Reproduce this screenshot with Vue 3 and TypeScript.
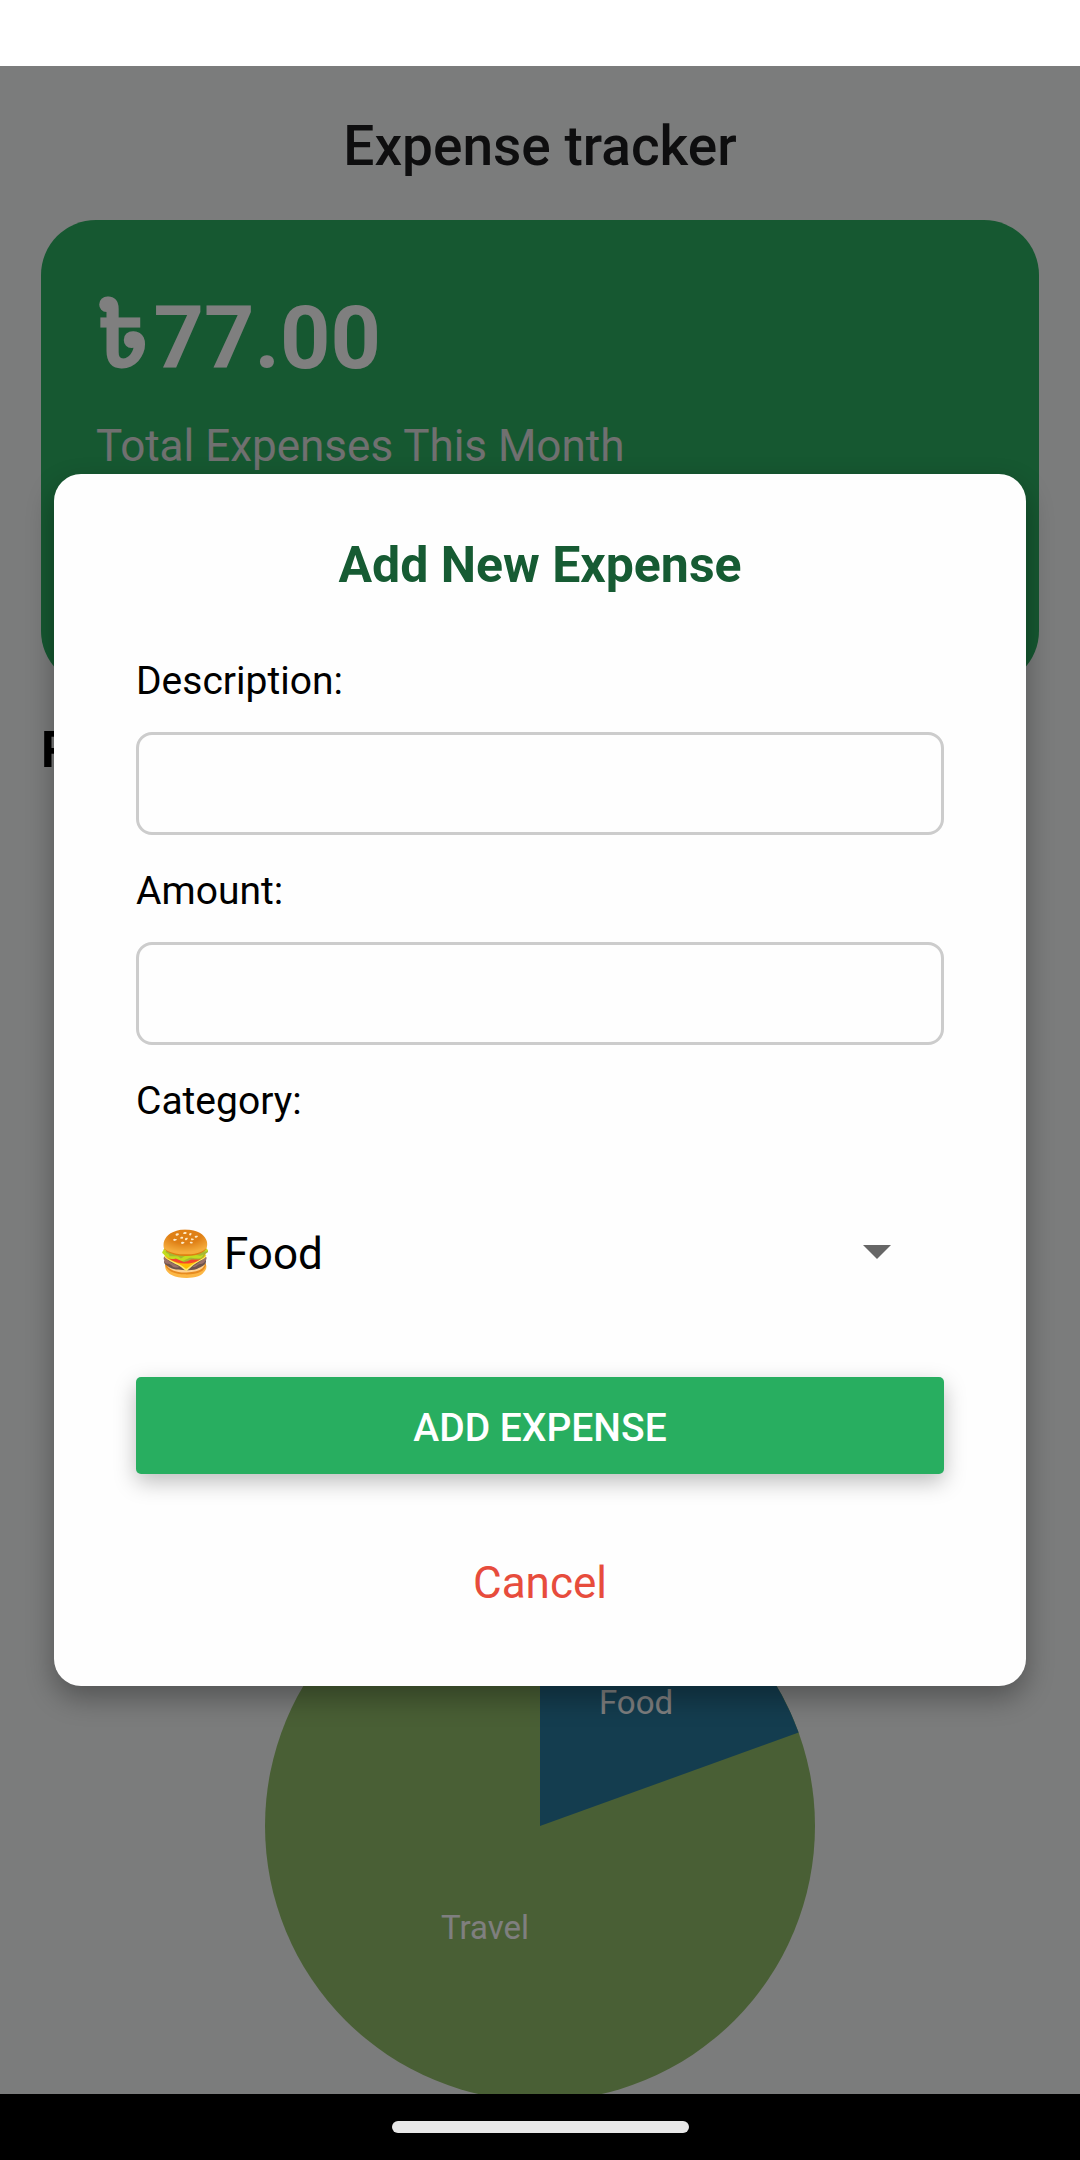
<script setup lang="ts">
import { ref } from 'vue'

const description = ref('')
const amount = ref('')
const category = ref('food')

// Share of each category: food 15 of 77, travel the rest
const radius = 275
const angle = (15 / 77) * 2 * Math.PI
const edgeX = radius + radius * Math.sin(angle)
const edgeY = radius - radius * Math.cos(angle)
const foodSlice = `M${radius} ${radius}V0A${radius} ${radius} 0 0 1 ${edgeX} ${edgeY}Z`
</script>

<template>
  <div class="screen">
    <div class="status-bar"></div>
    <div class="app">
      <header class="header"><h1>Expense tracker</h1></header>
      <main class="content">
        <section class="card">
          <p class="total"><span class="currency">৳</span>77.00</p>
          <p class="caption">Total Expenses This Month</p>
        </section>
        <h2 class="section-title">Recent Expenses</h2>
        <svg class="pie" viewBox="0 0 550 550" role="img" aria-label="Expenses by category">
          <circle cx="275" cy="275" r="275" fill="#92bf6a" />
          <path :d="foodSlice" fill="#287b9f" />
          <text x="371" y="163">Food</text>
          <text x="220" y="388">Travel</text>
        </svg>
      </main>
      <div class="backdrop">
        <form class="modal" role="dialog" aria-labelledby="modal-title" @submit.prevent>
          <h2 id="modal-title" class="modal-title">Add New Expense</h2>
          <div class="field">
            <label for="description">Description:</label>
            <input id="description" v-model="description" type="text" />
          </div>
          <div class="field">
            <label for="amount">Amount:</label>
            <input id="amount" v-model="amount" type="text" inputmode="decimal" />
          </div>
          <label for="category">Category:</label>
          <div class="picker">
            <select id="category" v-model="category">
              <option value="food">🍔 Food</option>
              <option value="travel">Travel</option>
            </select>
            <svg class="arrow" viewBox="0 0 28 14" aria-hidden="true"><path d="M0 0H28L14 14Z" fill="#666" /></svg>
          </div>
          <button class="submit" type="submit">ADD EXPENSE</button>
          <button class="cancel" type="button">Cancel</button>
        </form>
      </div>
    </div>
    <div class="nav-bar"><div class="home-indicator"></div></div>
  </div>
</template>

<style>
body {
  margin: 0;
}
</style>

<style scoped>
.screen {
  display: flex;
  flex-direction: column;
  height: 100vh;
  overflow: hidden;
  font-family: Roboto, "Noto Sans", sans-serif;
  color: #000;
}
.screen * {
  box-sizing: border-box;
}
h1,
h2,
p {
  margin: 0;
}
.status-bar {
  flex: none;
  height: 66px;
  background: #fff;
}
.app {
  position: relative;
  flex: 1;
  min-height: 0;
  overflow: hidden;
  background: #f7f9f8;
}
.header {
  padding: 48px 41px 42px;
  text-align: center;
}
.header h1 {
  font-size: 55px;
  line-height: 64px;
  font-weight: 500;
  color: #1c1c1e;
}
.content {
  display: flex;
  flex-direction: column;
  padding: 0 41px;
}
.card {
  min-height: 466px;
  padding: 66px 55px;
  border-radius: 55px;
  background: #2cb062;
}
.total {
  height: 104px;
  margin-bottom: 30px;
  font-size: 88px;
  line-height: 104px;
  font-weight: 700;
  color: #fff;
}
.currency {
  margin-right: 4px;
  font-family: "Noto Sans Bengali", Roboto, sans-serif;
  font-weight: 700;
  line-height: 1px;
}
.caption {
  font-size: 44px;
  line-height: 52px;
  color: #e0e0e0;
}
.section-title {
  margin-top: 35px;
  font-size: 50px;
  line-height: 58px;
  font-weight: 700;
}
.pie {
  align-self: center;
  width: 550px;
  height: 550px;
  margin-top: 772px;
}
.pie text {
  font-size: 33px;
  text-anchor: middle;
  fill: #fff;
}
.backdrop {
  position: absolute;
  inset: 0;
  display: flex;
  align-items: center;
  justify-content: center;
  background: rgba(0, 0, 0, 0.5);
}
.modal {
  display: flex;
  flex-direction: column;
  width: 90%;
  padding: 62px 82px 77px;
  border-radius: 27px;
  background: #fefefe;
  box-shadow: 0 12px 28px rgba(0, 0, 0, 0.32);
}
.modal-title {
  margin-bottom: 64px;
  font-size: 50px;
  line-height: 58px;
  font-weight: 700;
  text-align: center;
  color: #165b33;
}
.field {
  display: flex;
  flex-direction: column;
  gap: 28px;
  margin-bottom: 33px;
}
label {
  font-size: 39px;
  line-height: 46px;
}
input {
  width: 100%;
  height: 103px;
  padding: 0 27px;
  border: 3px solid #ccc;
  border-radius: 16px;
  background: transparent;
  font: inherit;
  font-size: 39px;
}
.picker {
  display: grid;
  align-items: center;
  height: 151px;
  margin: 54px 0 48px;
}
.picker > * {
  grid-area: 1 / 1;
}
select {
  width: 100%;
  height: 100%;
  padding: 0 22px;
  border: 0;
  appearance: none;
  background: transparent;
  font: inherit;
  font-size: 44px;
  color: #000;
}
.arrow {
  justify-self: end;
  width: 28px;
  height: 14px;
  margin: 0 53px 4px 0;
  pointer-events: none;
}
button {
  border: 0;
  font: inherit;
  cursor: pointer;
}
.submit {
  height: 97px;
  margin-bottom: 83px;
  padding: 4px 0 0;
  border-radius: 5px;
  background: #28ae60;
  box-shadow: 0 8px 22px rgba(0, 0, 0, 0.26);
  font-size: 39px;
  font-weight: 500;
  color: #fff;
}
.cancel {
  align-self: center;
  padding: 0;
  background: none;
  font-size: 44px;
  line-height: 52px;
  color: #e74c3c;
}
.nav-bar {
  display: flex;
  align-items: center;
  justify-content: center;
  flex: none;
  height: 66px;
  background: #000;
}
.home-indicator {
  width: 297px;
  height: 12px;
  border-radius: 6px;
  background: #e8e8e8;
}
</style>
